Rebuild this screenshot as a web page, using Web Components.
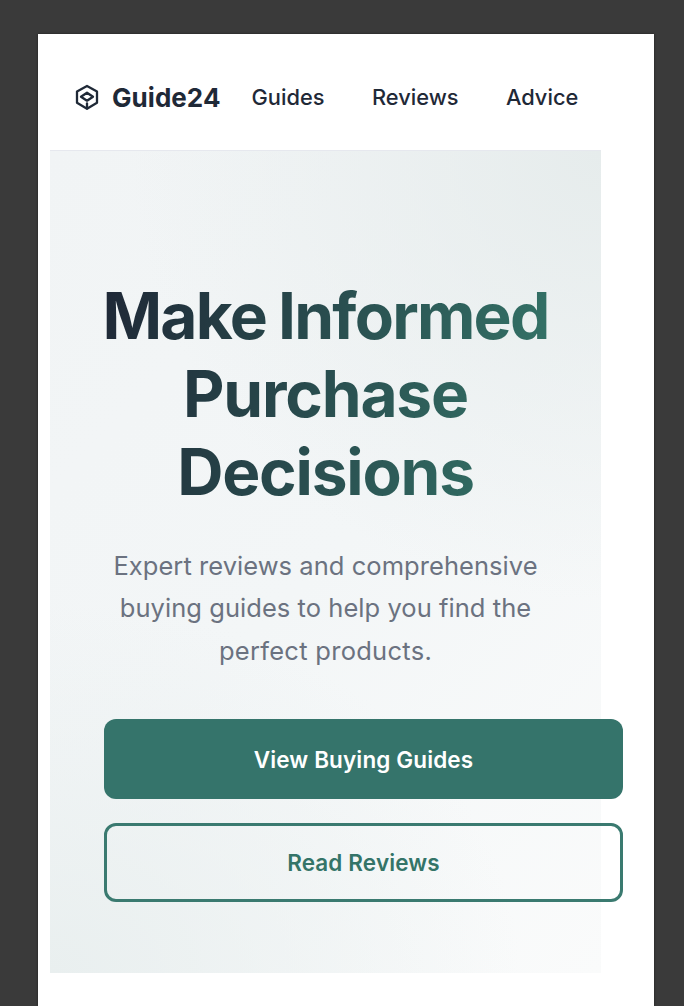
<!DOCTYPE html>
<html lang="en">
<head>
<meta charset="utf-8">
<title>Guide24</title>
<style>
  html, body { margin: 0; background: #3a3a3a; }
  body { font-family: "Inter", "Liberation Sans", sans-serif; height: 1006px; overflow: hidden; }
</style>
</head>
<body>
<page-frame>
  <site-header>
    <nav-link>Guides</nav-link>
    <nav-link>Reviews</nav-link>
    <nav-link>Advice</nav-link>
  </site-header>
  <hero-panel>
    <span slot="title" style="letter-spacing:-1.75px;word-spacing:-1.5px">Make Informed</span>
    <span slot="title">Purchase</span>
    <span slot="title">Decisions</span>
    <span slot="lead">Expert reviews and comprehensive buying guides to help you find the </span><span slot="lead" style="letter-spacing:.28px">perfect products.</span>
    <cta-button slot="actions" kind="solid">View Buying Guides</cta-button>
    <cta-button slot="actions" kind="outline">Read Reviews</cta-button>
  </hero-panel>
</page-frame>

<script>
class PageFrame extends HTMLElement {
  constructor () {
    super()
    this.attachShadow({mode:'open'}).innerHTML = `
    <style>
      :host{ display:block; padding:34px 30px 0 38px; }
      .sheet{
        background:#fff;
        min-height:972px;
        box-sizing:border-box;
        padding-left:12px;
        box-shadow:0 0 2px rgba(0,0,0,.5);
      }
    </style>
    <div class="sheet"><slot></slot></div>`
  }
}

class SiteHeader extends HTMLElement {
  constructor () {
    super()
    this.attachShadow({mode:'open'}).innerHTML = `
    <style>
      :host{ display:flex; align-items:center; height:116px; padding-left:25px; padding-top:10px; box-sizing:border-box; color:#1f2937; }
      svg{ width:24px; height:27px; flex:none; }
      .brand{ font-size:26px; font-weight:700; margin-left:13px; letter-spacing:.05px; }
      nav{ display:flex; gap:47.5px; margin-left:31px; }
    </style>
    <svg viewBox="0 0 24 27" fill="none" stroke="#1f2937" stroke-width="2.3" stroke-linejoin="round" stroke-linecap="round">
      <path d="M12 2 22 7.5V18.7L12 24.7 2 18.7V7.5Z"/>
      <path d="M12 8.7 18 12.7 12 16.7 6 12.7Z"/>
      <path d="M12 19.5V24.5"/>
    </svg>
    <span class="brand">Guide24</span>
    <nav><slot></slot></nav>`
  }
}

class NavLink extends HTMLElement {
  constructor () {
    super()
    this.attachShadow({mode:'open'}).innerHTML = `
    <style>
      :host{ display:block; font-size:21.8px; font-weight:500; color:#1f2937; }
    </style>
    <slot></slot>`
  }
}

class HeroPanel extends HTMLElement {
  constructor () {
    super()
    this.attachShadow({mode:'open'}).innerHTML = `
    <style>
      :host{
        display:block;
        width:551px;
        box-sizing:border-box;
        padding:126px 54px 71px;
        border-top:1px solid #e6e8ee;
        background:
          radial-gradient(470px 450px at 100% 0, #e6ecec 0, rgba(230,236,236,0) 100%),
          radial-gradient(470px 370px at 0 100%, #e9efef 0, rgba(233,239,239,0) 100%),
          linear-gradient(135deg, #f1f4f5 0, #f3f6f7 50%, #fafbfb 100%);
      }
      h1{
        margin:0 -20px;
        font-size:64px;
        line-height:78px;
        font-weight:700;
        letter-spacing:-1.2px;
        text-align:center;
        background:linear-gradient(100deg,#1f2937 5%,#347468 95%);
        -webkit-background-clip:text;
        background-clip:text;
        color:transparent;
      }
      ::slotted([slot="title"]){ display:block; }
      p{
        margin:33.5px 0 0;
        font-size:25.5px;
        line-height:42.5px;
        font-weight:400;
        letter-spacing:.05px;
        color:#6b7280;
        text-align:center;
      }
      .actions{ display:flex; flex-direction:column; gap:24px; width:519px; margin-top:47px; }
    </style>
    <h1><slot name="title"></slot></h1>
    <p><slot name="lead"></slot></p>
    <div class="actions"><slot name="actions"></slot></div>`
  }
}

class CtaButton extends HTMLElement {
  constructor () {
    super()
    const solid = this.getAttribute('kind') === 'solid'
    this.attachShadow({mode:'open'}).innerHTML = `
    <style>
      :host{
        display:flex;
        align-items:center;
        justify-content:center;
        box-sizing:border-box;
        height:${solid ? 80 : 79}px;
        border-radius:12px;
        font-size:22.5px;
        font-weight:600;
        letter-spacing:.13px;
        color:${solid ? '#fff' : '#347468'};
        background:${solid ? '#35746b' : 'transparent'};
        border:${solid ? '0' : '3px solid #3a7a70'};
      }
    </style>
    <slot></slot>`
  }
}

window.customElements.define('page-frame',PageFrame)
window.customElements.define('site-header',SiteHeader)
window.customElements.define('nav-link',NavLink)
window.customElements.define('hero-panel',HeroPanel)
window.customElements.define('cta-button',CtaButton)
</script>
</body>
</html>
